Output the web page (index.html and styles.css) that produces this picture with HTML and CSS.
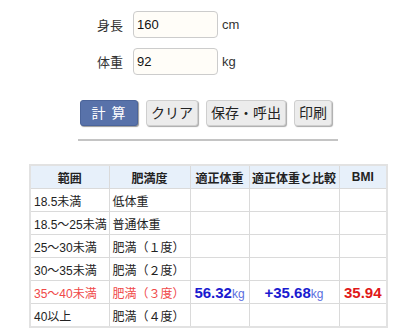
FILE: index.html
```html
<!DOCTYPE html>
<html lang="ja">
<head>
<meta charset="utf-8">
<link rel="stylesheet" href="styles.css">
</head>
<body>
<div class="page">
  <div class="form">
    <div class="row">
      <span class="label">身長</span>
      <input class="field" type="text" value="160">
      <span class="unit">cm</span>
    </div>
    <div class="row">
      <span class="label">体重</span>
      <input class="field" type="text" value="92">
      <span class="unit">kg</span>
    </div>
  </div>
  <div class="buttons">
    <button class="btn primary">計&nbsp;算</button>
    <button class="btn">クリア</button>
    <button class="btn">保存・呼出</button>
    <button class="btn">印刷</button>
  </div>
  <div class="rule"></div>
  <table class="bmi">
    <colgroup>
      <col class="c1"><col class="c2"><col class="c3"><col class="c4"><col class="c5">
    </colgroup>
    <thead>
      <tr><th>範囲</th><th>肥満度</th><th>適正体重</th><th>適正体重と比較</th><th>BMI</th></tr>
    </thead>
    <tbody>
      <tr><td>18.5未満</td><td>低体重</td><td></td><td></td><td></td></tr>
      <tr><td>18.5～25未満</td><td>普通体重</td><td></td><td></td><td></td></tr>
      <tr><td>25～30未満</td><td>肥満（１度）</td><td></td><td></td><td></td></tr>
      <tr><td>30～35未満</td><td>肥満（２度）</td><td></td><td></td><td></td></tr>
      <tr class="hit"><td>35～40未満</td><td>肥満（３度）</td><td class="val"><b>56.32</b><small>kg</small></td><td class="val"><b>+35.68</b><small>kg</small></td><td class="bmiv">35.94</td></tr>
      <tr><td>40以上</td><td>肥満（４度）</td><td></td><td></td><td></td></tr>
    </tbody>
  </table>
</div>
</body>
</html>
```
FILE: styles.css
```css
html, body {
  margin: 0;
  padding: 0;
  background: #fff;
}
body {
  font-family: "Liberation Sans", "Noto Sans CJK JP", sans-serif;
  color: #222;
}
.page {
  width: 400px;
  padding-top: 11px;
}
.form {
  display: flex;
  flex-direction: column;
  gap: 10px;
  padding-left: 97px;
}
.row {
  display: flex;
  align-items: center;
  height: 27px;
}
.label {
  width: 28px;
  font-size: 13px;
  color: #333;
  margin-right: 8px;
}
.field {
  box-sizing: border-box;
  width: 85px;
  height: 27px;
  border: 1px solid #ccc;
  border-radius: 4px;
  background: #fffdf8;
  font-family: "Liberation Sans", sans-serif;
  font-size: 13px;
  color: #111;
  padding: 0 3px;
  margin: 0;
}
.unit {
  font-size: 13px;
  color: #333;
  margin-left: 4px;
}
.buttons {
  display: flex;
  gap: 8px;
  padding-left: 80px;
  margin-top: 25px;
  align-items: flex-start;
}
.btn {
  box-sizing: border-box;
  height: 26px;
  padding: 0 4px;
  font-family: "Liberation Sans", "Noto Sans CJK JP", sans-serif;
  font-size: 14px;
  color: #222;
  background: #ececec;
  border: 1px solid #cfcfcf;
  border-radius: 3px;
  box-shadow: 1px 1px 1px #aaa;
  margin: 0;
  line-height: 24px;
}
.btn.primary {
  width: 58px;
  background: #5872aa;
  border-color: #4b649a;
  color: #fff;
  box-shadow: 1px 1px 1px #999;
  letter-spacing: 1px;
}
.rule {
  margin: 13px 0 0 78px;
  width: 260px;
  height: 2px;
  background: #c4c4c4;
}
.bmi {
  margin: 23px 0 0 29px;
  width: 357px;
  border-collapse: collapse;
  font-size: 12px;
  table-layout: fixed;
  border: 2px solid #e2e2e2;
}
.c1 { width: 79px; }
.c2 { width: 81px; }
.c3 { width: 59px; }
.c4 { width: 90px; }
.c5 { width: 48px; }
.bmi th, .bmi td {
  border: 1px solid #dadada;
  height: 22px;
  padding: 0 0 0 3px;
  white-space: nowrap;
  overflow: hidden;
}
.bmi th {
  background: #e7f0fa;
  font-weight: bold;
  color: #222;
  text-align: center;
  padding: 0;
}
.hit td {
  color: #f04848;
}
.bmi td.val {
  text-align: center;
  padding: 0;
  color: #1a1ad0;
}
.val b {
  font-size: 15px;
}
.val small {
  font-size: 12px;
  color: #5a6ee0;
}
.bmi td.bmiv {
  text-align: center;
  padding: 0;
  color: #e01818;
  font-weight: bold;
  font-size: 15px;
}
```
